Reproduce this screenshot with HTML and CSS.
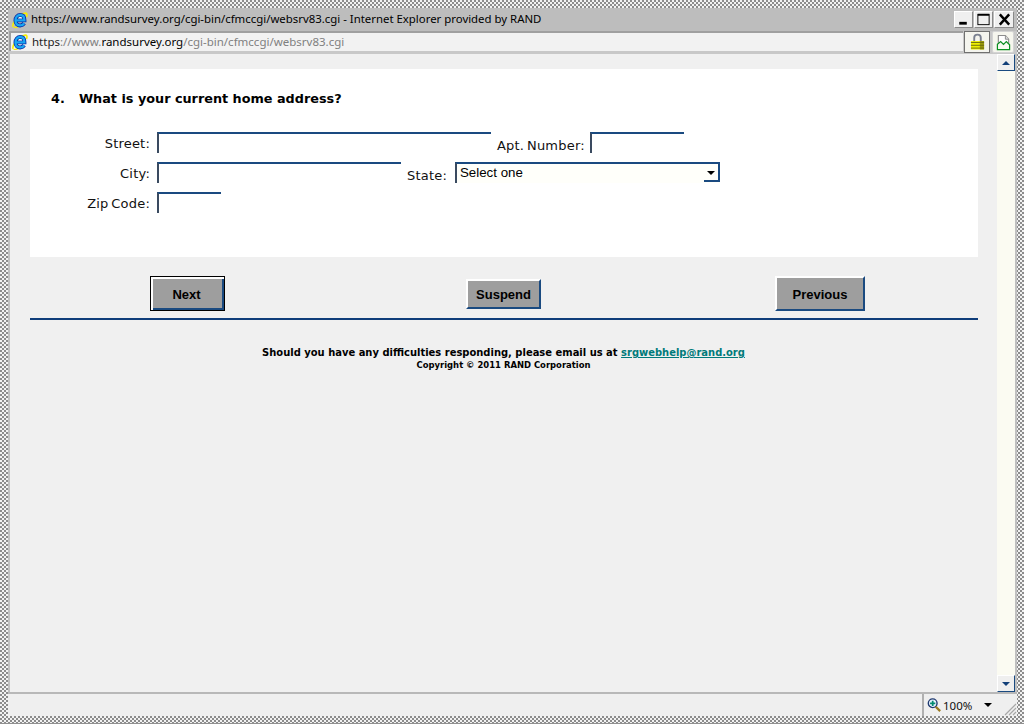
FILE: index.html
```html
<!DOCTYPE html>
<html lang="en">
<head>
<meta charset="utf-8">
<title>RAND survey</title>
<link rel="stylesheet" href="styles.css">
</head>
<body>
<div class="window">
  <header class="titlebar">
    <svg class="ie" viewBox="0 0 16 16">
      <defs>
        <g id="ie-icon">
          <path d="M1.200 14.800C-.2 12.500 4.500 3.500 12.500 1.200c2.400-.6 3 1.300 2 3.800" fill="none" stroke="#f6ee00" stroke-width="1.600"/>
          <path d="M1.700 15.300c1.200.7 3.200 0 5-1.300" fill="none" stroke="#f6ee00" stroke-width="1.300"/>
          <path d="M4.200 8.300h8.200c0-3.800-1.800-5.300-4.100-5.300-2.700 0-4.800 2.300-4.800 5.500s2 4.900 4.600 4.900c1.900 0 3.200-.8 4-2.100" fill="none" stroke="#0c2fa6" stroke-width="4"/>
          <path d="M4.200 8.300h8.200c0-3.800-1.800-5.300-4.100-5.300-2.700 0-4.800 2.300-4.800 5.500s2 4.900 4.600 4.900c1.900 0 3.200-.8 4-2.100" fill="none" stroke="#18a6f2" stroke-width="2.300"/>
          <path d="M6 6.600c.4-1.100 1.300-1.700 2.300-1.700s1.900.6 2.100 1.700z" fill="#e8f8ff"/>
        </g>
      </defs>
      <use href="#ie-icon"/>
    </svg>
    <span class="title-text">https://www.randsurvey.org/cgi-bin/cfmccgi/websrv83.cgi - Internet Explorer provided by RAND</span>
    <div class="win-buttons">
      <span class="win-btn"><svg viewBox="0 0 18 16"><rect x="4.500" y="10.500" width="8" height="3" fill="#000"/></svg></span>
      <span class="win-btn"><svg viewBox="0 0 18 16"><rect x="3" y="2.500" width="12" height="11" fill="none" stroke="#000" stroke-width="1"/><rect x="3" y="2" width="12" height="2" fill="#000"/></svg></span>
      <span class="win-btn win-close"><svg viewBox="0 0 18 16"><path d="M4 2.500l10 11M14 2.500l-10 11" stroke="#000" stroke-width="2.600"/></svg></span>
    </div>
  </header>
  <div class="addressrow">
    <div class="addressbar">
      <svg class="ie" viewBox="0 0 16 16"><use href="#ie-icon"/></svg>
      <span class="url"><span class="dim-a">https</span><span class="dim">://www.</span>randsurvey.org<span class="dim">/cgi-bin/cfmccgi/websrv83.cgi</span></span>
    </div>
    <span class="lock-box">
      <svg viewBox="0 0 16 18"><path d="M4.500 9V4.500c0-4.500 7-4.500 7 0V9" fill="none" stroke="#7a8090" stroke-width="2"/><rect x="1" y="8" width="14" height="9" fill="#f0f000"/><path d="M1 9.500h14M1 12.500h14M1 15.500h14" stroke="#6a6a10" stroke-width="1"/><rect x="10.500" y="8" width="4.500" height="9" fill="#6a6a10" opacity=".65"/></svg>
    </span>
    <span class="page-box">
      <svg viewBox="0 0 16 18"><path d="M2.500 1.500h7.500l3.500 4v7h-11z" fill="#fff" stroke="#8c8c8c" stroke-width="1.200"/><path d="M10 1.500v4h3.500" fill="#ddd" stroke="#8c8c8c"/><path d="M1.500 16.500V11l3.500-3 3 3 3-3 3.500 3.500v5z" fill="#f6fbf0" stroke="#0a9020" stroke-width="1.300"/></svg>
    </span>
  </div>
  <div class="viewport">
    <main class="page">
      <section class="panel">
        <h1 class="question"><span class="qnum">4.</span>What is your current home address?</h1>
        <form class="address-form">
          <div class="row">
            <label class="lbl lbl-left">Street:</label>
            <input class="field field-street" type="text">
            <label class="lbl lbl-drop lbl-apt">Apt. Number:</label>
            <input class="field field-apt" type="text">
          </div>
          <div class="row">
            <label class="lbl lbl-left">City:</label>
            <input class="field field-city" type="text">
            <label class="lbl lbl-drop lbl-state">State:</label>
            <span class="select-wrap">
              <select class="state-select"><option>Select one</option></select>
              <span class="select-arrow"></span>
            </span>
          </div>
          <div class="row">
            <label class="lbl lbl-left">Zip Code:</label>
            <input class="field field-zip" type="text">
          </div>
        </form>
      </section>
      <div class="actions">
        <button class="btn btn-next" type="button">Next</button>
        <button class="btn btn-suspend" type="button">Suspend</button>
        <button class="btn btn-prev" type="button">Previous</button>
      </div>
      <footer class="foot">
        <p class="foot-help">Should you have any difficulties responding, please email us at <a href="#">srgwebhelp@rand.org</a></p>
        <p class="foot-copy">Copyright © 2011 RAND Corporation</p>
      </footer>
    </main>
    <aside class="scrollbar">
      <span class="sb-btn"><span class="tri-up"></span></span>
      <span class="sb-btn"><span class="tri-down"></span></span>
    </aside>
  </div>
  <div class="statusbar">
    <div class="zoom-cell">
      <svg class="zoom-icon" viewBox="0 0 16 16"><circle cx="6.500" cy="6" r="5" fill="#e8f4ff" stroke="#203a70" stroke-width="1.600"/><path d="M3.500 6h6M6.500 3v6" stroke="#008a70" stroke-width="2"/><path d="M10 10l5 5" stroke="#9a7a20" stroke-width="2.600"/></svg>
      <span class="zoom-text">100%</span>
      <span class="tri-black"></span>
      <svg class="grip" viewBox="0 0 14 14"><path d="M13 2L2 13M13 6l-7 7M13 10l-3 3" stroke="#a8a8a8" stroke-width="1.200"/></svg>
    </div>
  </div>
</div>
</body>
</html>
```
FILE: styles.css
```css
* { box-sizing: border-box; }
html, body { margin: 0; padding: 0; }
body { width: 1024px; height: 724px; overflow: hidden; font-family: "DejaVu Sans", sans-serif; }

.window {
  width: 1024px;
  height: 724px;
  padding: 8px 7px 7px 8px;
  display: flex;
  flex-direction: column;
  background-color: #f2f2f2;
  background-image: conic-gradient(#8c8c8c 25%, #f2f2f2 0 50%, #8c8c8c 0 75%, #f2f2f2 0);
  background-size: 4px 4px;
  border-bottom: 1px solid #909090;
}

.titlebar {
  height: 23px;
  flex: none;
  background: #bdbdbd;
  display: flex;
  align-items: center;
  padding: 0 3px 0 4px;
}
.ie { width: 16px; height: 16px; flex: none; }
.title-text {
  margin-left: 3px;
  margin-bottom: 2px;
  font: 11.4px "Noto Sans", sans-serif;
  color: #000;
  white-space: nowrap;
}
.win-buttons { margin-left: auto; display: flex; gap: 1px; align-items: center; }
.win-btn {
  width: 19px;
  height: 17px;
  background: #efefef;
  border: 1px solid;
  border-color: #fff #8a8a8a #8a8a8a #fff;
  display: flex;
  align-items: center;
  justify-content: center;
}
.win-close { width: 20px; }
.win-btn svg { width: 17px; height: 15px; }

.addressrow {
  height: 23px;
  flex: none;
  background: #c8c8c8;
  display: flex;
  align-items: flex-start;
  padding: 0 1px;
}
.addressbar {
  width: 954px;
  height: 20px;
  background: #f2f2f2;
  border-top: 2px solid #a0a0a0;
  border-left: 2px solid #a0a0a0;
  display: flex;
  align-items: center;
  padding-left: 1px;
}
.url {
  margin-left: 4px;
  margin-bottom: 2px;
  font: 11.5px "Noto Sans", sans-serif;
  color: #000;
  white-space: nowrap;
}
.dim { color: #808080; }
.dim-a { color: #222; }
.lock-box {
  width: 26px;
  height: 22px;
  background: #f4f4ee;
  border: 1px solid #707070;
  display: flex;
  align-items: center;
  justify-content: center;
  margin-left: 1px;
}
.lock-box svg { width: 15px; height: 18px; }
.page-box {
  width: 22px;
  height: 22px;
  background: #f6f6ee;
  border: 1px solid #d4d4d4;
  border-radius: 2px;
  display: flex;
  align-items: center;
  justify-content: center;
  margin-left: 2px;
}
.page-box svg { width: 15px; height: 17px; }

.viewport {
  flex: 1;
  min-height: 0;
  display: flex;
  border-left: 2px solid #c0c0c0;
  border-right: 2px solid #c0c0c0;
  background: #f0f0f0;
}
.page { flex: 1; padding: 15px 19px 0 20px; min-width: 0; }
.panel {
  height: 188px;
  background: #fff;
  padding: 23px 0 0 21px;
}
.question {
  margin: 0;
  font: bold 12.8px/14px "DejaVu Sans", sans-serif;
  color: #000;
  height: 40px;
}
.qnum { display: inline-block; width: 28px; }

.address-form { display: flex; flex-direction: column; }
.row { display: flex; height: 30px; align-items: flex-start; }
.lbl {
  font: 13px/16px "DejaVu Sans", sans-serif;
  letter-spacing: .2px;
  word-spacing: -1.5px;
  color: #111;
  white-space: nowrap;
}
.lbl-left { width: 99px; text-align: right; margin-top: 4px; margin-right: 7px; }
.lbl-drop { margin-top: 6px; }
.lbl-apt { margin-left: 6px; margin-right: 5px; }
.lbl-state { margin-left: 6px; margin-right: 8px; }
.field {
  height: 21px;
  background: #fff;
  border: 0;
  border-top: 2px solid #1a4a80;
  border-left: 2px solid #3a4a60;
  padding: 0;
}
.field-street { width: 334px; }
.field-apt { width: 94px; }
.field-city { width: 244px; }
.field-zip { width: 64px; }

.select-wrap { position: relative; display: block; width: 265px; height: 21px; }
.state-select {
  display: block;
  width: 100%;
  height: 100%;
  appearance: none;
  -webkit-appearance: none;
  background: #fffffa;
  border: 0;
  border-top: 2px solid #1a4a80;
  border-left: 2px solid #3a4a60;
  border-radius: 0;
  padding: 0 0 2px 3px;
  font: 13.3px "Liberation Sans", sans-serif;
  color: #000;
}
.select-arrow {
  position: absolute;
  right: 0;
  top: 2px;
  width: 16px;
  height: 18px;
  background: #fffffa;
  border-right: 2px solid #1a4a80;
  border-bottom: 2px solid #1a4a80;
}
.select-arrow::after {
  content: "";
  position: absolute;
  left: 3px;
  top: 7px;
  border-left: 4px solid transparent;
  border-right: 4px solid transparent;
  border-top: 4px solid #000;
}

.actions {
  display: flex;
  align-items: flex-start;
  height: 63px;
  padding: 19px 0 0 120px;
  border-bottom: 2px solid #0f3d7a;
}
.btn {
  background: #9e9e9e;
  font: bold 13px "Liberation Sans", sans-serif;
  color: #000;
  border: 2px solid;
  border-color: #fff #1a4a80 #1a4a80 #fff;
  padding: 0;
}
.btn-next {
  width: 75px;
  height: 35px;
  padding: 1px 2px 0 0;
  border: 1px solid #000;
  box-shadow: inset 2px 2px 0 #fff, inset -2px -2px 0 #1a4a80;
}
.btn-suspend { width: 75px; height: 30px; margin: 3px 0 0 241px; }
.btn-prev { width: 90px; height: 35px; margin-left: 234px; padding-top: 1px; }

.foot { text-align: center; padding-top: 26px; padding-right: 1px; color: #000; }
.foot p { margin: 0; }
.foot-help { font: bold 9.96px/13px "DejaVu Sans", sans-serif; }
.foot-help a { color: #007a7a; }
.foot-copy { font: bold 8.45px/12px "DejaVu Sans", sans-serif; }

.scrollbar {
  width: 18px;
  flex: none;
  background: #fbfbf2;
  display: flex;
  flex-direction: column;
  justify-content: space-between;
}
.sb-btn {
  width: 18px;
  height: 17px;
  background: #efefef;
  border: 1px solid;
  border-color: #fff #1a4a80 #1a4a80 #fff;
  display: flex;
  align-items: center;
  justify-content: center;
}
.tri-up { border-left: 4px solid transparent; border-right: 4px solid transparent; border-bottom: 4px solid #123f78; }
.tri-down { border-left: 4px solid transparent; border-right: 4px solid transparent; border-top: 4px solid #123f78; }

.statusbar {
  height: 24px;
  flex: none;
  background: #efefef;
  border-top: 2px solid #b8b8b8;
  display: flex;
  justify-content: flex-end;
}
.zoom-cell {
  width: 95px;
  border-left: 2px solid #b0b0b0;
  display: flex;
  align-items: center;
  padding-left: 3px;
  position: relative;
}
.zoom-icon { width: 14px; height: 14px; }
.zoom-text { margin-left: 2px; font: 11.5px "Noto Sans", sans-serif; color: #111; }
.tri-black { margin-left: 12px; border-left: 4px solid transparent; border-right: 4px solid transparent; border-top: 4px solid #000; }
.grip { position: absolute; right: 0; bottom: 0; width: 14px; height: 14px; }
```
